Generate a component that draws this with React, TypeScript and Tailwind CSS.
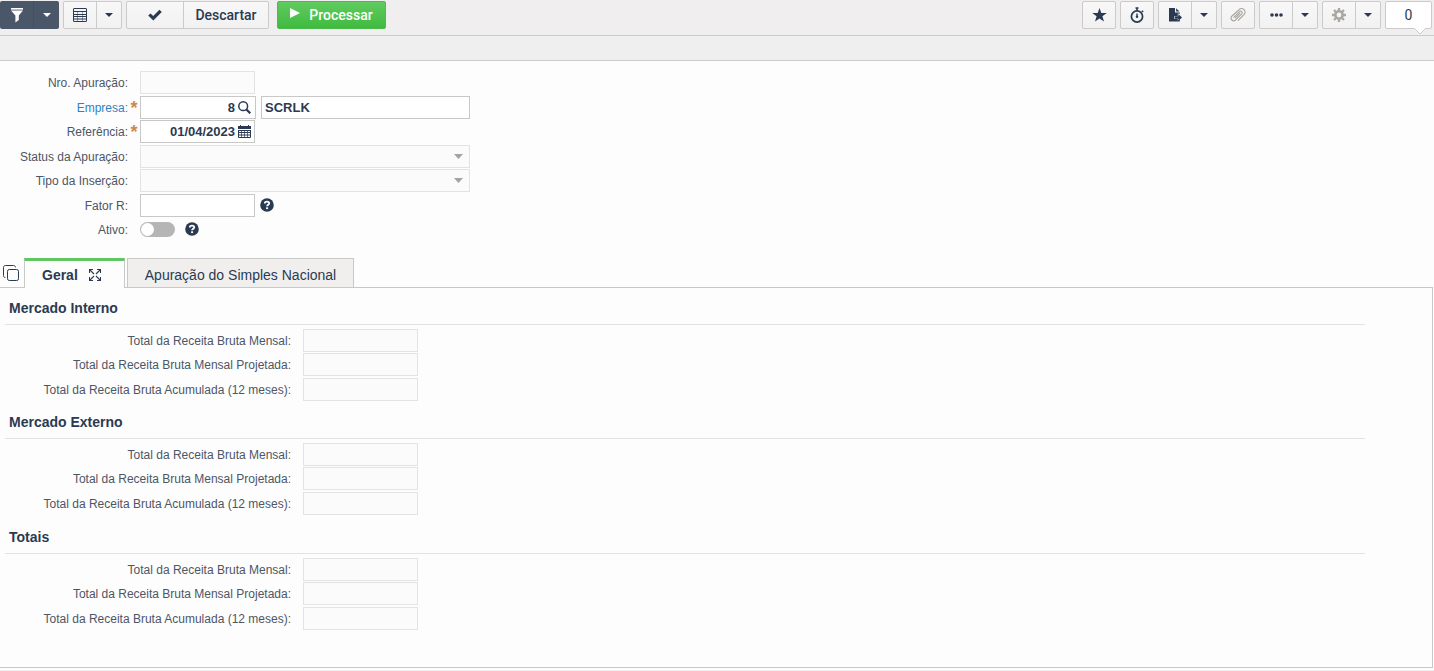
import { useState, type ReactNode } from 'react';
import clsx from 'clsx';

const sections = [
  { id: 'interno', title: 'Mercado Interno' },
  { id: 'externo', title: 'Mercado Externo' },
  { id: 'totais', title: 'Totais' },
];

const totals = [
  'Total da Receita Bruta Mensal:',
  'Total da Receita Bruta Mensal Projetada:',
  'Total da Receita Bruta Acumulada (12 meses):',
];

const inputBase = 'h-[23px] border px-[3px] text-[13px] font-bold text-[#2b3a52] outline-none';
const inputOff = 'border-[#e3e3e3] bg-[#fbfbfb]';
const inputOn = 'border-[#c8c8c8] bg-white';

/* Icons */

function FilterIcon() {
  return (
    <svg width="14" height="15" viewBox="0 0 14 15" fill="currentColor">
      <path d="M1 0h12v1.6H1z" />
      <path d="M1 2.4h12L8.8 7.6V12L5.4 14.4V7.6z" />
    </svg>
  );
}

function CaretIcon({ className = '' }: { className?: string }) {
  return (
    <svg className={className} width="8" height="4" viewBox="0 0 8 4" preserveAspectRatio="none" fill="currentColor">
      <path d="M0 0h8L4 4z" />
    </svg>
  );
}

function GridIcon() {
  return (
    <svg width="14" height="14" viewBox="0 0 14 14" fill="none" stroke="currentColor">
      <rect x="0.5" y="0.5" width="13" height="13" rx="0.5" />
      <path d="M0 3.5h14M0 6.5h14M0 8.5h14M0 11h14" />
      <path d="M4.5 3v11M9.5 3v11" strokeOpacity="0.45" />
    </svg>
  );
}

function CheckIcon() {
  return (
    <svg width="14" height="12" viewBox="0 0 14 12" fill="currentColor">
      <path d="M0.2 6.6 2.6 4.4 5.2 6.9 11.4 0.8 13.8 3 5.3 11.4z" />
    </svg>
  );
}

function StarIcon() {
  return (
    <svg width="15" height="14" viewBox="0 0 15 14" fill="currentColor">
      <path d="M7.5 0 9.3 5.1H14.8L10.4 8.3 12 13.6 7.5 10.4 3 13.6 4.6 8.3 0.2 5.1H5.7z" />
    </svg>
  );
}

function TimerIcon() {
  return (
    <svg width="14" height="16" viewBox="0 0 14 16" fill="none" stroke="currentColor">
      <circle cx="7" cy="9.5" r="5.6" strokeWidth="1.7" />
      <path d="M5.5 1h3M7 1v3" strokeWidth="1.6" />
      <path d="M11.8 3.8l1.4 1" strokeWidth="1.6" />
      <path d="M7 6.5v4" strokeWidth="1.4" />
      <circle cx="7" cy="9.8" r="0.8" fill="currentColor" />
    </svg>
  );
}

function ExportIcon() {
  return (
    <svg width="13" height="14" viewBox="0 0 13 14" fill="currentColor">
      <path d="M0 0h6v4.5h4.8v1.2L8.8 5.4V8H5.4v3h3.4v1.6l2-1v2H0z" />
      <path d="M7.1 0.2 10.4 3.5H7.1z" />
      <path d="M9.4 6 13 9.5 9.4 13V10.8H6V8.2H9.4z" />
    </svg>
  );
}

function ClipIcon() {
  return (
    <svg width="16" height="15" viewBox="0 0 16 15" fill="none" stroke="currentColor" strokeWidth="1.2">
      <path d="M3.6 9.6 9.5 3.7a1.5 1.5 0 0 1 2.2 2.2l-6 6a2.6 2.6 0 0 1-3.9-3.7L9 1.7a3.5 3.5 0 0 1 5 5L8 12.6" />
      <path d="M5.2 10 10 5.2" />
    </svg>
  );
}

function DotsIcon() {
  return (
    <svg width="13" height="4" viewBox="0 0 13 4" fill="currentColor">
      <circle cx="2" cy="2" r="1.8" />
      <circle cx="6.5" cy="2" r="1.8" />
      <circle cx="11" cy="2" r="1.8" />
    </svg>
  );
}

function GearIcon() {
  return (
    <svg width="14" height="14" viewBox="0 0 14 14" fill="none" stroke="currentColor">
      <circle cx="7" cy="7" r="3.7" strokeWidth="2.6" />
      <path d="M7 0v2.5M7 11.5V14M0 7h2.5M11.5 7H14M2 2l1.8 1.8M10.2 10.2 12 12M2 12l1.8-1.8M10.2 3.8 12 2" strokeWidth="2.3" />
    </svg>
  );
}

function SearchIcon() {
  return (
    <svg width="13" height="13" viewBox="0 0 13 13" fill="none" stroke="currentColor">
      <circle cx="5.2" cy="5.2" r="4.4" strokeWidth="1.5" />
      <path d="M8.2 8.2 12.3 12.3" strokeWidth="2.2" />
    </svg>
  );
}

function CalendarIcon() {
  return (
    <svg width="13" height="13" viewBox="0 0 13 13" fill="none" stroke="currentColor">
      <path d="M0 1h13v3H0z" fill="currentColor" stroke="none" />
      <path d="M2.5 0v2M10.5 0v2" />
      <path d="M0.5 5v7.5h12V5M0 5.5h13M0 7.5h13M0 10h13" />
      <path d="M3.5 5v8M6.5 5v8M9.5 5v8" strokeOpacity="0.7" />
    </svg>
  );
}

function CopyIcon() {
  return (
    <svg width="16" height="16" viewBox="0 0 16 16" fill="none" stroke="currentColor">
      <rect x="4.5" y="4.5" width="11" height="11" rx="1.8" />
      <path d="M2.4 12.5C1.2 12.5 0.5 11.8 0.5 10.7V2.4C0.5 1.2 1.2 0.5 2.4 0.5h8.2C11.8 0.5 12.4 1.2 12.4 2.4" />
    </svg>
  );
}

function ExpandIcon() {
  return (
    <svg width="12" height="12" viewBox="0 0 12 12" fill="none" stroke="currentColor" strokeWidth="1.1">
      <path d="M0.5 4V0.5H4M8 0.5h3.5V4M11.5 8v3.5H8M4 11.5H0.5V8" />
      <path d="M0.5 0.5 5 5M11.5 0.5 7 5M11.5 11.5 7 7M0.5 11.5 5 7" />
    </svg>
  );
}

function HelpButton() {
  return (
    <button type="button" aria-label="Ajuda" className="pb-0.5 text-[#2b3a52]">
      <svg className="block" width="14" height="14" viewBox="0 0 14 14">
        <circle cx="7" cy="7" r="6.8" fill="currentColor" />
        <path d="M4.8 5.4C4.8 3 9.2 3 9.2 5.4 9.2 6.8 7.1 6.8 7.1 8.3" fill="none" stroke="#fff" strokeWidth="1.8" />
        <path d="M6.1 9.3h2v1.8h-2z" fill="#fff" />
      </svg>
    </button>
  );
}

/* Toolbar */

type ToolProps = { label: string; children: ReactNode; className?: string };

function Tool({ label, children, className = 'w-[33px]' }: ToolProps) {
  return (
    <button type="button" aria-label={label} className={clsx('flex h-full items-center justify-center', className)}>
      {children}
    </button>
  );
}

function ToolGroup({ children, muted = false }: { children: ReactNode; muted?: boolean }) {
  return (
    <div
      className={clsx(
        'flex h-7 divide-x divide-[#cbcbcb] rounded-xs border border-[#cbcbcb] bg-linear-to-b from-[#f8f8f8] to-[#f1f1f1]',
        muted ? 'text-[#aaa6a2]' : 'text-[#2b3a52]',
      )}
    >
      {children}
    </div>
  );
}

function Toolbar() {
  return (
    <header>
      <div className="flex h-9 justify-between border-b border-[#cbcbcb] bg-[#f0eeee] pt-px pr-0.5">
        <div className="flex gap-1">
          <div className="flex h-7 divide-x divide-[#435062] rounded-xs bg-[#4a5769] text-white">
            <Tool label="Filtrar" className="w-[34px]">
              <FilterIcon />
            </Tool>
            <Tool label="Opções de filtro" className="w-[25px]">
              <CaretIcon />
            </Tool>
          </div>
          <ToolGroup>
            <Tool label="Modo grade">
              <GridIcon />
            </Tool>
            <Tool label="Opções de grade" className="w-6">
              <CaretIcon />
            </Tool>
          </ToolGroup>
          <ToolGroup>
            <Tool label="Salvar" className="w-[57px]">
              <CheckIcon />
            </Tool>
            <button type="button" className="w-[84px] font-[Roboto,sans-serif] text-sm font-medium">
              Descartar
            </button>
          </ToolGroup>
          <button
            type="button"
            className="ml-1 flex h-7 w-[109px] items-center justify-center gap-[9px] rounded-xs border border-[#4cba4c] bg-linear-to-b from-[#5fcb5f] to-[#3fbb3f] font-[Roboto,sans-serif] text-sm font-medium text-white"
          >
            <svg className="mb-1" width="10" height="10" viewBox="0 0 10 10" fill="currentColor">
              <path d="M0 0 10 5 0 10z" />
            </svg>
            Processar
          </button>
        </div>

        <div className="flex gap-1">
          <ToolGroup>
            <Tool label="Favorito" className="w-8">
              <StarIcon />
            </Tool>
          </ToolGroup>
          <ToolGroup>
            <Tool label="Agendar" className="w-8">
              <TimerIcon />
            </Tool>
          </ToolGroup>
          <ToolGroup>
            <Tool label="Exportar">
              <ExportIcon />
            </Tool>
            <Tool label="Opções de exportação" className="w-6">
              <CaretIcon />
            </Tool>
          </ToolGroup>
          <ToolGroup muted>
            <Tool label="Anexos" className="w-8">
              <ClipIcon />
            </Tool>
          </ToolGroup>
          <ToolGroup>
            <Tool label="Mais">
              <DotsIcon />
            </Tool>
            <Tool label="Mais opções" className="w-6">
              <CaretIcon />
            </Tool>
          </ToolGroup>
          <ToolGroup muted>
            <Tool label="Configurações">
              <GearIcon />
            </Tool>
            <Tool label="Opções de configuração" className="w-6 text-[#2b3a52]">
              <CaretIcon />
            </Tool>
          </ToolGroup>
          <button
            type="button"
            className="relative h-7 w-[47px] rounded-xs border border-[#cbcbcb] bg-white font-[Roboto,sans-serif] text-sm text-[#2b3a52]"
          >
            0
            <svg className="absolute right-1 -bottom-[7px]" width="14" height="7" viewBox="0 0 14 7">
              <path d="M1 0 7 6 13 0" fill="#fff" stroke="#cbcbcb" />
            </svg>
          </button>
        </div>
      </div>
      <div className="h-[25px] border-b border-[#cbcbcb] bg-[#efefef]" />
    </header>
  );
}

/* Form */

type FieldProps = { id: string; label: string; required?: boolean; link?: boolean; children: ReactNode };

function Field({ id, label, required, link, children }: FieldProps) {
  return (
    <div className="flex h-[23px] items-center odd:mb-0.5 even:mb-px">
      <label htmlFor={id} className={clsx('w-32 text-right text-xs', link && 'text-[#2a84c6]')}>
        {label}
      </label>
      <span className="w-3 text-center text-lg leading-none font-bold text-[#cb8b50]">{required && '*'}</span>
      {children}
    </div>
  );
}

function DisabledSelect({ id }: { id: string }) {
  return (
    <div className="relative">
      <select id={id} disabled className={clsx(inputBase, inputOff, 'block w-[330px] appearance-none opacity-100')}>
        <option value="" />
      </select>
      <CaretIcon className="pointer-events-none absolute top-[9px] right-[7px] h-[5px] w-[9px] text-[#a3a3a3]" />
    </div>
  );
}

function HeaderForm() {
  const [ativo, setAtivo] = useState(false);

  return (
    <form className="pt-2.5">
      <Field id="nro" label="Nro. Apuração:">
        <input id="nro" disabled className={clsx(inputBase, inputOff, 'w-[115px]')} />
      </Field>
      <Field id="empresa" label="Empresa:" required link>
        <div className={clsx('flex h-[23px] w-[116px] items-center border pr-1 text-[#2b3a52]', inputOn)}>
          <input id="empresa" defaultValue="8" className="w-full min-w-0 pr-[3px] text-right text-[13px] font-bold outline-none" />
          <button type="button" aria-label="Pesquisar empresa">
            <SearchIcon />
          </button>
        </div>
        <input aria-label="Nome da empresa" defaultValue="SCRLK" className={clsx(inputBase, inputOn, 'ml-[5px] w-[209px]')} />
      </Field>
      <Field id="referencia" label="Referência:" required>
        <div className={clsx('flex h-[23px] w-[115px] items-center border pr-[3px] text-[#2b3a52]', inputOn)}>
          <input id="referencia" defaultValue="01/04/2023" className="w-full min-w-0 pr-[3px] text-right text-[13px] font-bold outline-none" />
          <button type="button" aria-label="Abrir calendário">
            <CalendarIcon />
          </button>
        </div>
      </Field>
      <Field id="status" label="Status da Apuração:">
        <DisabledSelect id="status" />
      </Field>
      <Field id="tipo" label="Tipo da Inserção:">
        <DisabledSelect id="tipo" />
      </Field>
      <Field id="fator" label="Fator R:">
        <input id="fator" className={clsx(inputBase, inputOn, 'mr-[5px] w-[115px]')} />
        <HelpButton />
      </Field>
      <Field id="ativo" label="Ativo:">
        <input
          id="ativo"
          type="checkbox"
          role="switch"
          checked={ativo}
          onChange={(e) => setAtivo(e.target.checked)}
          className="mr-2.5 flex h-[15px] w-[35px] appearance-none items-center rounded-full bg-[#b5b5b5] px-px before:size-[13px] before:rounded-full before:bg-white checked:justify-end checked:bg-[#62c962]"
        />
        <HelpButton />
      </Field>
    </form>
  );
}

function Section({ id, title }: { id: string; title: string }) {
  return (
    <section className="mr-[67px] ml-[5px] even:pb-px">
      <h2 className="mb-1 flex h-[37px] items-center border-b border-[#e2e2e2] pt-1 pl-1 text-sm font-bold text-[#2b3a52]">{title}</h2>
      {totals.map((label, i) => (
        <div key={label} className="flex h-[23px] items-center odd:mb-0.5 even:mb-px">
          <label htmlFor={`${id}-${i}`} className="w-[286px] text-right text-xs">
            {label}
          </label>
          <input id={`${id}-${i}`} disabled className={clsx(inputBase, inputOff, 'ml-3 w-[115px]')} />
        </div>
      ))}
    </section>
  );
}

export default function App() {
  return (
    <div className="flex min-h-screen flex-col bg-[#fdfdfd] font-['Liberation_Sans',Arial,sans-serif] text-[#4d5665]">
      <Toolbar />
      <HeaderForm />

      {/* Tabs */}
      <div className="mt-[15px] flex h-[30px] shrink-0 text-sm text-[#2b3a52]">
        <div className="flex w-6 items-center border-b border-[#c8c8c8] pl-[3px]">
          <button type="button" aria-label="Duplicar">
            <CopyIcon />
          </button>
        </div>
        <div role="tablist" className="flex grow">
          <button
            type="button"
            role="tab"
            aria-selected="true"
            className="flex w-[101px] items-center gap-[11px] border-x border-x-[#c8c8c8] border-t-[3px] border-t-[#5fc75f] pl-[17px] font-bold"
          >
            Geral
            <ExpandIcon />
          </button>
          <span className="w-0.5 border-b border-[#c8c8c8]" />
          <button type="button" role="tab" aria-selected="false" className="w-[227px] border border-[#c8c8c8] bg-[#f1efee] pt-1">
            Apuração do Simples Nacional
          </button>
          <span className="mr-px grow border-b border-[#c8c8c8]" />
        </div>
      </div>

      <main className="mr-px mb-0.5 grow border-r border-b border-[#c8c8c8]">
        {sections.map((section) => (
          <Section key={section.id} id={section.id} title={section.title} />
        ))}
      </main>
      <div className="h-px bg-[#f0f0f0]" />
    </div>
  );
}
